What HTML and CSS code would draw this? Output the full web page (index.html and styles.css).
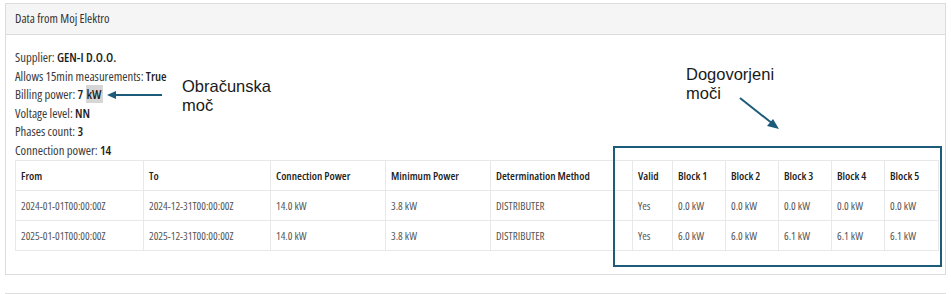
FILE: index.html
```html
<!DOCTYPE html>
<html lang="en">
<head>
<meta charset="utf-8">
<link rel="stylesheet" href="styles.css">
</head>
<body>
<div class="page">
  <section class="panel">
    <div class="panel-heading">Data from Moj Elektro</div>
    <div class="panel-body">
      <ul class="facts">
        <li>Supplier: <b>GEN-I D.O.O.</b></li>
        <li>Allows 15min measurements: <b>True</b></li>
        <li>Billing power: <b>7 <span class="hl">kW</span></b></li>
        <li>Voltage level: <b>NN</b></li>
        <li>Phases count: <b>3</b></li>
        <li>Connection power: <b>14</b></li>
      </ul>
      <table class="grid">
        <colgroup>
          <col style="width:128px"><col style="width:127px"><col style="width:115px"><col style="width:105px"><col style="width:142px">
          <col style="width:40px"><col style="width:53px"><col style="width:53px"><col style="width:53px"><col style="width:53px"><col style="width:54px">
        </colgroup>
        <thead>
          <tr><th>From</th><th>To</th><th>Connection Power</th><th>Minimum Power</th><th>Determination Method</th><th>Valid</th><th>Block 1</th><th>Block 2</th><th>Block 3</th><th>Block 4</th><th>Block 5</th></tr>
        </thead>
        <tbody>
          <tr><td>2024-01-01T00:00:00Z</td><td>2024-12-31T00:00:00Z</td><td>14.0 kW</td><td>3.8 kW</td><td>DISTRIBUTER</td><td>Yes</td><td>0.0 kW</td><td>0.0 kW</td><td>0.0 kW</td><td>0.0 kW</td><td>0.0 kW</td></tr>
          <tr><td>2025-01-01T00:00:00Z</td><td>2025-12-31T00:00:00Z</td><td>14.0 kW</td><td>3.8 kW</td><td>DISTRIBUTER</td><td>Yes</td><td>6.0 kW</td><td>6.0 kW</td><td>6.1 kW</td><td>6.1 kW</td><td>6.1 kW</td></tr>
        </tbody>
      </table>
    </div>
  </section>
  <section class="panel next"></section>

  <div class="note note-billing">Obračunska<br>moč</div>
  <svg class="arrow arrow-left" width="60" height="12" viewBox="0 0 60 12">
    <line x1="8" y1="6" x2="56" y2="6" stroke="#1d5b7b" stroke-width="2"/>
    <polygon points="1,6 10,2 10,10" fill="#1d5b7b"/>
  </svg>
  <div class="note note-blocks">Dogovorjeni<br>moči</div>
  <svg class="arrow arrow-diag" width="44" height="36" viewBox="0 0 44 36">
    <line x1="2" y1="2" x2="35" y2="28" stroke="#1d5b7b" stroke-width="2"/>
    <polygon points="41,33 29,30 35,23" fill="#1d5b7b"/>
  </svg>
  <div class="highlight-box"></div>
</div>
</body>
</html>
```
FILE: styles.css
```css
html, body { margin: 0; background: #fff; }
body { font-family: "Open Sans", "Liberation Sans", sans-serif; font-stretch: 75%; color: #333; }
.page { position: relative; width: 951px; height: 294px; padding: 3px 5px 0; box-sizing: border-box; overflow: hidden; }

.panel { border: 1px solid #dcdcdc; background: #fff; }
.panel-heading { height: 30px; line-height: 30px; padding: 0 9px; background: #f5f5f5; border-bottom: 1px solid #dcdcdc; font-size: 12.5px; color: #333; }
.panel-body { padding: 13px 7px 23px 9px; }
.panel.next { margin-top: 18px; height: 20px; border-bottom: none; }

.facts { list-style: none; margin: 0; padding: 0; font-size: 12.7px; line-height: 18.5px; color: #3a3a3a; }
.facts b { color: #1e1e1e; font-weight: 600; }
.hl { background: #d6d6d6; padding: 0 1px; }

.grid { border-collapse: collapse; table-layout: fixed; width: 924px; margin-top: 1px; }
.grid th, .grid td { border: 1px solid #e6e8ea; padding: 0 5px; height: 29px; text-align: left; white-space: nowrap; overflow: hidden; }
.grid th { font-size: 11.2px; font-weight: 600; color: #222; }
.grid td { font-size: 11px; color: #555; }

.note { position: absolute; font-family: "Liberation Sans", Arial, sans-serif; font-stretch: normal; font-size: 16.5px; line-height: 18.5px; color: #1a1a1a; }
.note-billing { left: 182px; top: 77px; }
.note-blocks { left: 686px; top: 65px; }
.arrow { position: absolute; }
.arrow-left { left: 106px; top: 89px; }
.arrow-diag { left: 738px; top: 96px; }
.highlight-box { position: absolute; left: 613px; top: 146px; width: 325px; height: 117px; border: 2px solid #1d5b7b; }
```
